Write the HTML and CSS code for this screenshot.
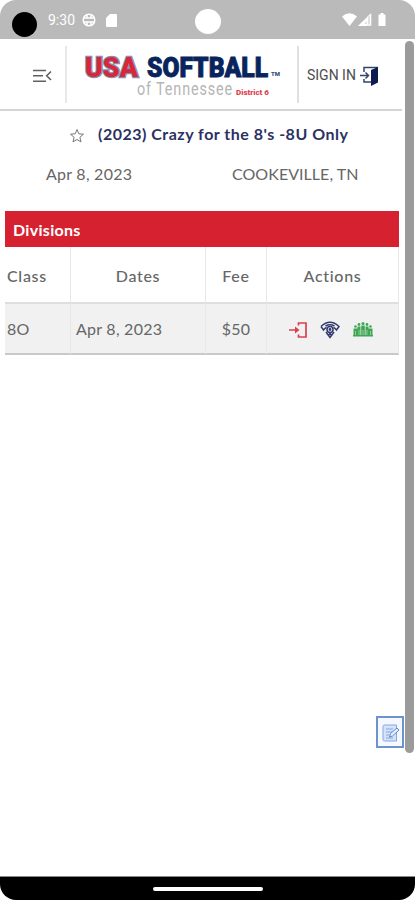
FILE: index.html
```html
<!DOCTYPE html>
<html lang="en">
  <head>
    <meta charset="UTF-8" />
    <meta name="viewport" content="width=device-width, initial-scale=1.0" />
    <title>USA Softball of Tennessee</title>
    <link rel="stylesheet" href="styles.css" />
  </head>
  <body>
    <div class="phone">
      <div class="status-bar">
        <span class="status-dot"></span>
        <span class="status-time">9:30</span>
        <svg class="status-globe" width="14" height="14" viewBox="0 0 14 14">
          <circle cx="7" cy="7" r="5.8" />
          <path d="M1.5 5h11M1.5 9h11M5 2v3M9 2v3M5 9v3M9 9v3" />
        </svg>
        <svg class="status-card" width="11" height="13" viewBox="0 0 11 13">
          <path d="M4 0h6q1 0 1 1v11q0 1-1 1H1q-1 0-1-1V4z" />
        </svg>
        <span class="camera"></span>
        <svg class="status-right" width="46" height="14" viewBox="0 0 46 14">
          <path d="M0 3.500Q7.500-3 15 3.500L7.500 13z" />
          <path d="M16 13L29.500 0v13z" opacity=".55" />
          <path d="M16 13l9-8.700v3.700l-3 3h3v2z" />
          <path d="M25.500 12V4l3-3v11z" fill="none" stroke="#fff" />
          <path d="M38.500 0h3v1.500h2V13h-7V1.500h2z" />
        </svg>
      </div>

      <header class="header">
        <button class="menu-btn" aria-label="Menu">
          <svg width="19" height="14" viewBox="0 0 19 14">
            <path d="M0 1.500h13M0 6.800h10M0 12.200h13M18 2.500L13.700 6.800 18 11" />
          </svg>
        </button>
        <div class="logo">
          <svg width="202" height="48" viewBox="0 0 202 48">
            <text class="logo-usa" x="5" y="28.500" textLength="53" lengthAdjust="spacingAndGlyphs">USA</text>
            <text class="logo-softball" x="67" y="28.500" textLength="121" lengthAdjust="spacingAndGlyphs">SOFTBALL</text>
            <text class="logo-tm" x="191" y="28" textLength="9" lengthAdjust="spacingAndGlyphs">TM</text>
            <text class="logo-state" transform="translate(57 47) scale(0.8 1)" textLength="119">of Tennessee</text>
            <text class="logo-district" x="156" y="46.500" textLength="33" lengthAdjust="spacingAndGlyphs">District 6</text>
          </svg>
        </div>
        <a class="sign-in" href="#">
          <span>SIGN IN</span>
          <svg width="19" height="20" viewBox="0 0 19 20">
            <path class="door-frame" d="M4 6V1.500h14M4 13v3h7M0 9.500h8M5.500 6.500l3 3-3 3" />
            <path class="door" d="M11 4l7-3v15.500L11 20z" />
          </svg>
        </a>
      </header>

      <main class="content">
        <div class="title-row">
          <svg width="16" height="16" viewBox="0 0 16 16">
            <path d="M8 1.500l1.800 4.300 4.700.4-3.600 3.100 1.100 4.600L8 11.500l-4 2.400 1.100-4.600-3.600-3.100 4.700-.4z" />
          </svg>
          <h1>(2023) Crazy for the 8's -8U Only</h1>
        </div>
        <div class="info-row">
          <span class="info-date">Apr 8, 2023</span>
          <span class="info-place">COOKEVILLE, TN</span>
        </div>

        <section class="divisions">
          <h2>Divisions</h2>
          <table>
            <thead>
              <tr>
                <th class="col-class">Class</th>
                <th class="col-dates">Dates</th>
                <th class="col-fee">Fee</th>
                <th class="col-actions">Actions</th>
              </tr>
            </thead>
            <tbody>
              <tr>
                <td class="col-class">8O</td>
                <td class="col-dates">Apr 8, 2023</td>
                <td class="col-fee">$50</td>
                <td class="col-actions">
                  <div class="actions">
                    <svg class="icon-enter" width="18" height="16" viewBox="0 0 18 16">
                      <path d="M0 8h9M9.500 3.500V1H17v14H9.500v-2.500" />
                      <path class="fill" d="M6 4.500L10.500 8 6 11.500z" />
                    </svg>
                    <svg class="icon-field" width="20" height="18" viewBox="0 0 20 18">
                      <path d="M1 5.500Q10-3 19 5.500L16.500 9Q15 7 13.500 6.500M1 5.500L3.500 9Q5 7 6.500 6.500M5.500 5Q10 2.500 14.500 5M6 11l4 5.500 4-5.500M8 15l2-2.500 2 2.500" />
                      <circle cx="10" cy="8.500" r="3" />
                      <circle class="fill" cx="10" cy="8.500" r="0.700" />
                    </svg>
                    <svg class="icon-teams" width="20" height="15" viewBox="0 0 20 15">
                      <circle cx="2.500" cy="4.500" r="1.300" />
                      <circle cx="6" cy="2.500" r="1.400" />
                      <circle cx="10" cy="1.500" r="1.500" />
                      <circle cx="14" cy="2.500" r="1.400" />
                      <circle cx="17.500" cy="4.500" r="1.300" />
                      <path d="M.5 6.500h4V14h-4zM4.500 4.500h3V14h-3zM8.200 3.500h3.600V14H8.200zM12.500 4.500h3V14h-3zM15.500 6.500h4V14h-4zM0 13h20v1.500H0z" />
                      <path class="gaps" d="M2.500 9v4M6 8v5M10 8v5M14 8v5M17.500 9v4" />
                    </svg>
                  </div>
                </td>
              </tr>
            </tbody>
          </table>
        </section>
      </main>

      <div class="scrollbar"></div>
      <button class="note-btn" aria-label="Notes">
        <svg width="18" height="18" viewBox="0 0 18 18">
          <path class="paper" d="M2.500 1h12v16h-12q-1.500 0-1.500-1.500v-13Q1 1 2.500 1z" />
          <path d="M4 5h7M4 8h6M4 11h3M4 14h7" />
          <path class="pencil" d="M7.500 13l1-3.500L15 4l2 2-6.500 6z" />
        </svg>
      </button>
      <footer class="nav-bar"><span></span></footer>
    </div>
  </body>
</html>
```
FILE: styles.css
```css
* {
  margin: 0;
  padding: 0;
  box-sizing: border-box;
}

body {
  font-family: Lato, "Open Sans", sans-serif;
  background: #fff;
  color: #666;
}

button {
  border: none;
  background: none;
}

.phone {
  position: relative;
  display: flex;
  flex-direction: column;
  width: 415px;
  height: 900px;
  overflow: hidden;
}

.status-bar {
  position: relative;
  display: flex;
  align-items: center;
  height: 39px;
  padding: 1px 27px 0 12px;
  background: #bababa;
  border-radius: 16px 16px 0 0;
  flex-shrink: 0;
}

.status-dot {
  width: 25px;
  height: 25px;
  margin-top: 8px;
  border-radius: 50%;
  background: #000;
}

.status-time {
  width: 34px;
  margin-left: 11px;
  font: 14px Roboto, sans-serif;
  color: #fff;
}

.status-globe {
  fill: none;
  stroke: #fff;
  stroke-width: 1.5;
}

.status-card {
  margin-left: 10px;
  fill: #fff;
}

.camera {
  position: absolute;
  left: 195px;
  top: 9px;
  width: 26px;
  height: 25px;
  border-radius: 50%;
  background: #fff;
}

.status-right {
  margin-left: auto;
  fill: #fff;
}

.header {
  display: flex;
  align-items: center;
  width: 402px;
  height: 72px;
  border-bottom: 2px solid #d5d5d5;
  flex-shrink: 0;
}

.menu-btn {
  display: flex;
  align-items: center;
  width: 65px;
  height: 57px;
  padding: 3px 0 0 33px;
}

.menu-btn svg {
  fill: none;
  stroke: #606060;
  stroke-width: 1.6;
}

.logo {
  display: flex;
  align-items: flex-end;
  width: 234px;
  height: 57px;
  padding: 0 0 7px 13px;
  border-left: 2px solid #e8e8e8;
  border-right: 2px solid #e0e0e0;
}

.logo text {
  font-family: Roboto, sans-serif;
}

.logo svg {
  overflow: visible;
}

.logo .logo-usa,
.logo .logo-softball {
  font-size: 27px;
  font-weight: 900;
}

.logo-usa {
  fill: #d92638;
  stroke: #8291b5;
  stroke-width: 2.5;
  paint-order: stroke;
}

.logo-softball {
  fill: #08245c;
  stroke: #08245c;
  stroke-width: 0.9;
}

.logo-tm {
  font-size: 5px;
  font-weight: 900;
  fill: #36517d;
}

.logo-state {
  font-size: 18px;
  fill: #b5b5b5;
}

.logo-district {
  font-size: 8px;
  font-weight: 900;
  fill: #df4350;
}

.sign-in {
  display: flex;
  align-items: center;
  margin-left: 8px;
  font: 14px Roboto, sans-serif;
  color: #4d4d4d;
  text-decoration: none;
}

.sign-in span {
  width: 53px;
  padding-top: 2px;
  white-space: nowrap;
}

.sign-in svg {
  margin-top: 4px;
}

.door-frame {
  fill: none;
  stroke: #35446c;
  stroke-width: 1.5;
}

.door {
  fill: #0d1c4c;
}

.content {
  width: 402px;
  flex: 1;
}

.title-row {
  display: flex;
  align-items: center;
  height: 46px;
  padding-left: 69px;
}

.title-row svg {
  margin-top: 4px;
  fill: none;
  stroke: #777;
}

h1 {
  margin: -1px 0 0 13px;
  font-size: 16px;
  line-height: 20px;
  letter-spacing: 0.5px;
  white-space: nowrap;
  color: #2c3163;
}

.info-row {
  display: flex;
  height: 54px;
  padding: 7px 0 0 46px;
  font-size: 16px;
  line-height: 20px;
}

.info-date {
  width: 186px;
  letter-spacing: 0.25px;
}

.info-place {
  white-space: nowrap;
  letter-spacing: 0.05px;
}

.divisions {
  width: 394px;
  margin-left: 5px;
}

h2 {
  height: 36px;
  padding-left: 8px;
  font-size: 16px;
  line-height: 37px;
  letter-spacing: 0.3px;
  color: #fff;
  background: #d62130;
}

table {
  width: 394px;
  table-layout: fixed;
  border-collapse: separate;
  border-spacing: 0;
}

th,
td {
  font-size: 16px;
  text-align: center;
  border-right: 1px solid #e8e8e8;
}

th {
  height: 57px;
  padding-top: 2px;
  font-weight: 500;
  letter-spacing: 0.7px;
  border-bottom: 2px solid #dedede;
}

td {
  height: 51px;
  letter-spacing: 0.25px;
  background: #f1f1f1;
  border-bottom: 2px solid #c9c9c9;
}

.col-class {
  width: 66px;
  padding-left: 2px;
  text-align: left;
}

.col-dates {
  width: 135px;
}

td.col-dates {
  padding-left: 5px;
  text-align: left;
}

.col-fee {
  width: 61px;
}

.actions {
  display: flex;
  align-items: center;
  gap: 13px;
  padding: 2px 0 0 22px;
}

.actions svg {
  flex-shrink: 0;
}

.icon-enter {
  fill: none;
  stroke: #d9414c;
  stroke-width: 1.7;
}

.icon-enter .fill {
  fill: #d9414c;
  stroke: none;
}

.icon-field {
  fill: none;
  stroke: #333b70;
  stroke-width: 1.5;
}

.icon-field .fill {
  fill: #333b70;
}

.icon-teams {
  fill: #40a653;
}

.icon-teams .gaps {
  stroke: #b6dcbc;
  stroke-width: 0.7;
}

.scrollbar {
  position: absolute;
  top: 41px;
  right: 1px;
  width: 9px;
  height: 712px;
  border-radius: 5px;
  background: #9b9b9b;
}

.note-btn {
  position: absolute;
  left: 376px;
  top: 716px;
  display: flex;
  align-items: center;
  justify-content: center;
  width: 28px;
  height: 32px;
  padding: 2px 0 0 2px;
  border: 2px solid #6d93cc;
  background: #f5f9ff;
}

.note-btn svg {
  fill: none;
  stroke: #83a7df;
}

.note-btn .paper {
  fill: #d4e3fa;
}

.note-btn .pencil {
  fill: #e8f1ff;
  stroke: #5c88ca;
}

.nav-bar {
  display: flex;
  justify-content: center;
  height: 24px;
  padding-top: 10px;
  border-top: 1px solid #888;
  border-radius: 0 0 16px 16px;
  background: #000;
  flex-shrink: 0;
}

.nav-bar span {
  width: 110px;
  height: 4px;
  border-radius: 2px;
  background: #fff;
}
```
